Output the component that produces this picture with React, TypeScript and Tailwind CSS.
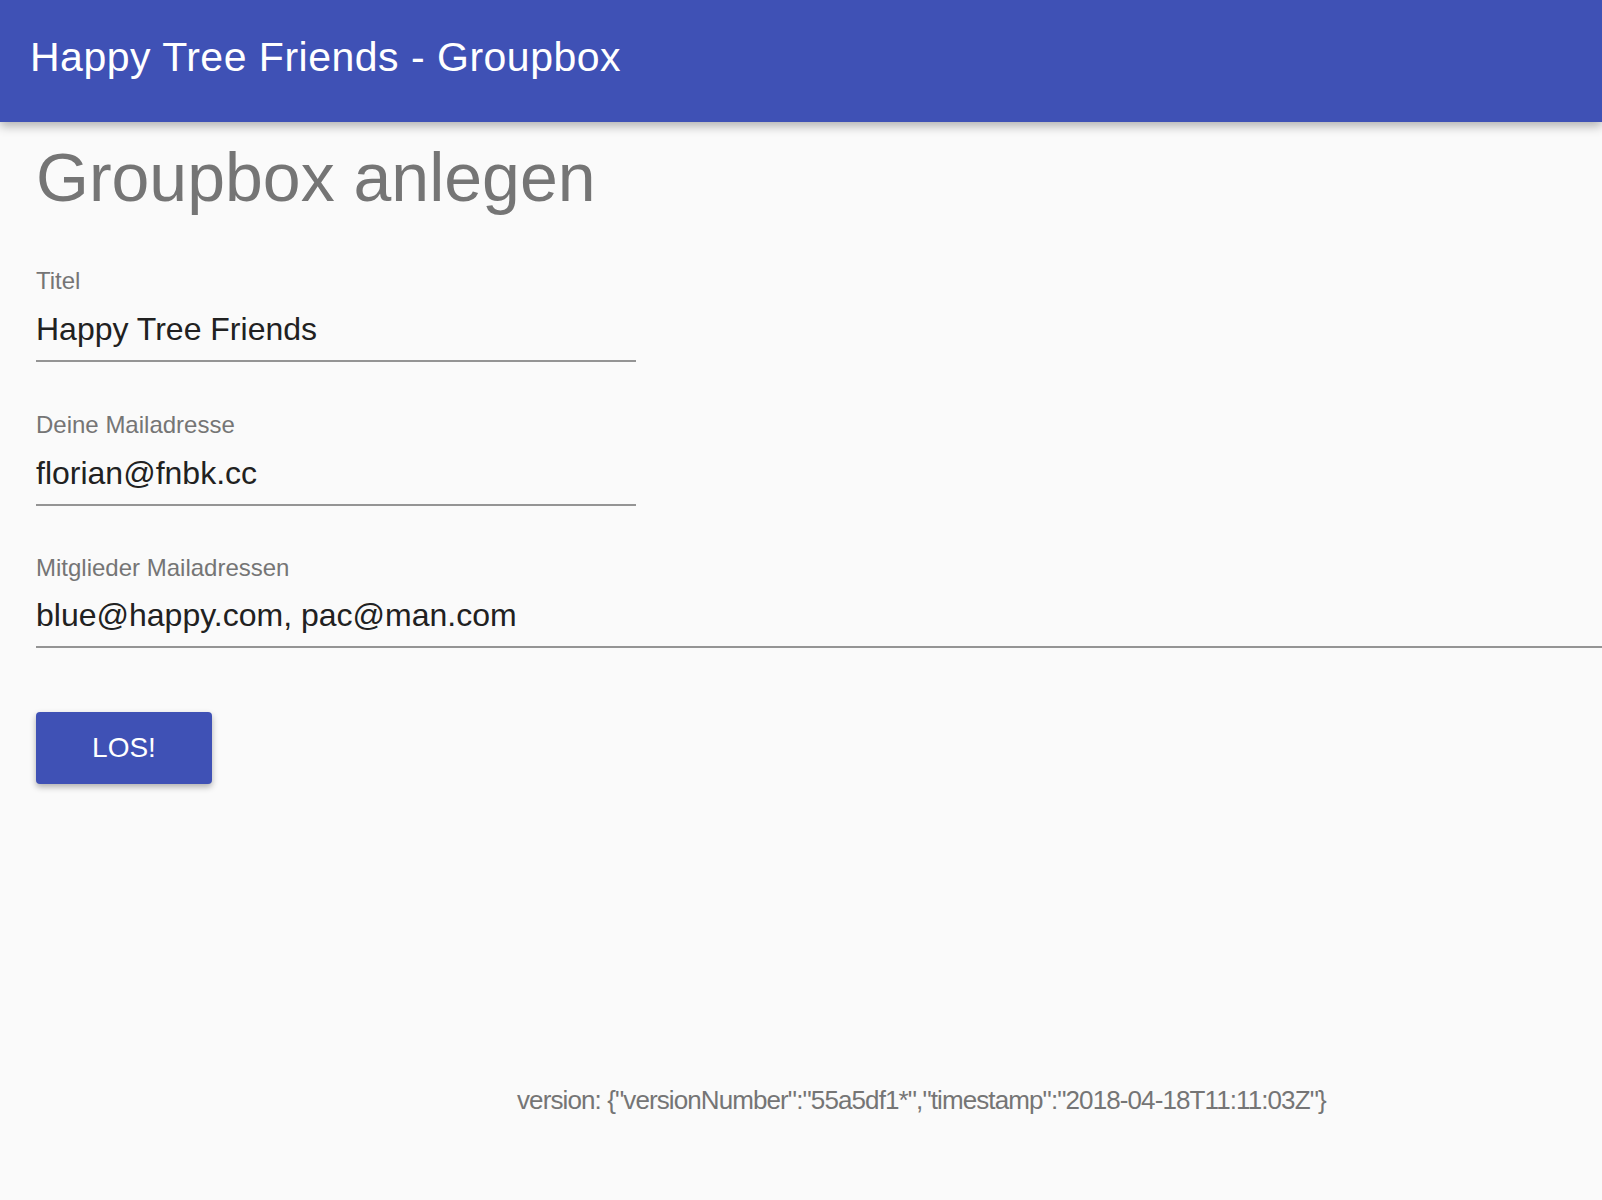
import React from "react";

function Field({
  label,
  value,
  wide,
  gapTop,
  gapBottom,
}: {
  label: string;
  value: string;
  wide?: boolean;
  gapTop: string;
  gapBottom: string;
}) {
  return (
    <div className={wide ? "w-full" : "w-[600px]"}>
      <div className="text-[24px] leading-none text-[#757575]">{label}</div>
      <div className={`${gapTop} text-[32px] leading-none text-[#212121] whitespace-nowrap`}>{value}</div>
      <div className={`${gapBottom} h-[2px] bg-[#949494]`} />
    </div>
  );
}

export default function App() {
  return (
    <div
      className="min-h-[1200px] w-full bg-[#fafafa] overflow-hidden"
      style={{ fontFamily: '"Liberation Sans", Arial, sans-serif' }}
    >
      <header className="relative z-10 h-[122px] bg-[#3f51b5] pl-[30px] pt-[37px] shadow-[0_4px_10px_rgba(0,0,0,0.3)]">
        <div className="text-[41px] leading-none tracking-[0.5px] text-white whitespace-nowrap">
          Happy Tree Friends - Groupbox
        </div>
      </header>
      <main className="pl-[36px]">
        <h1 className="mt-[21px] text-[68px] leading-none font-normal text-[#757575] whitespace-nowrap">
          Groupbox anlegen
        </h1>
        <div className="mt-[58px] flex flex-col">
          <Field label="Titel" value="Happy Tree Friends" gapTop="mt-[20px]" gapBottom="mt-[15px]" />
          <div className="mt-[51px]">
            <Field label="Deine Mailadresse" value="florian@fnbk.cc" gapTop="mt-[20px]" gapBottom="mt-[15px]" />
          </div>
          <div className="mt-[50px]">
            <Field
              label="Mitglieder Mailadressen"
              value="blue@happy.com, pac@man.com"
              wide
              gapTop="mt-[19px]"
              gapBottom="mt-[15px]"
            />
          </div>
        </div>
        <button className="mt-[64px] flex h-[72px] w-[176px] items-center justify-center rounded-[4px] bg-[#3f51b5] text-[28px] leading-none text-white shadow-[0_3px_6px_rgba(0,0,0,0.3)]">
          LOS!
        </button>
        <div className="mt-[303px] pl-[481px] text-[26px] leading-none tracking-[-0.9px] text-[#757575] whitespace-nowrap">
          version: {'{"versionNumber":"55a5df1*","timestamp":"2018-04-18T11:11:03Z"}'}
        </div>
      </main>
    </div>
  );
}
